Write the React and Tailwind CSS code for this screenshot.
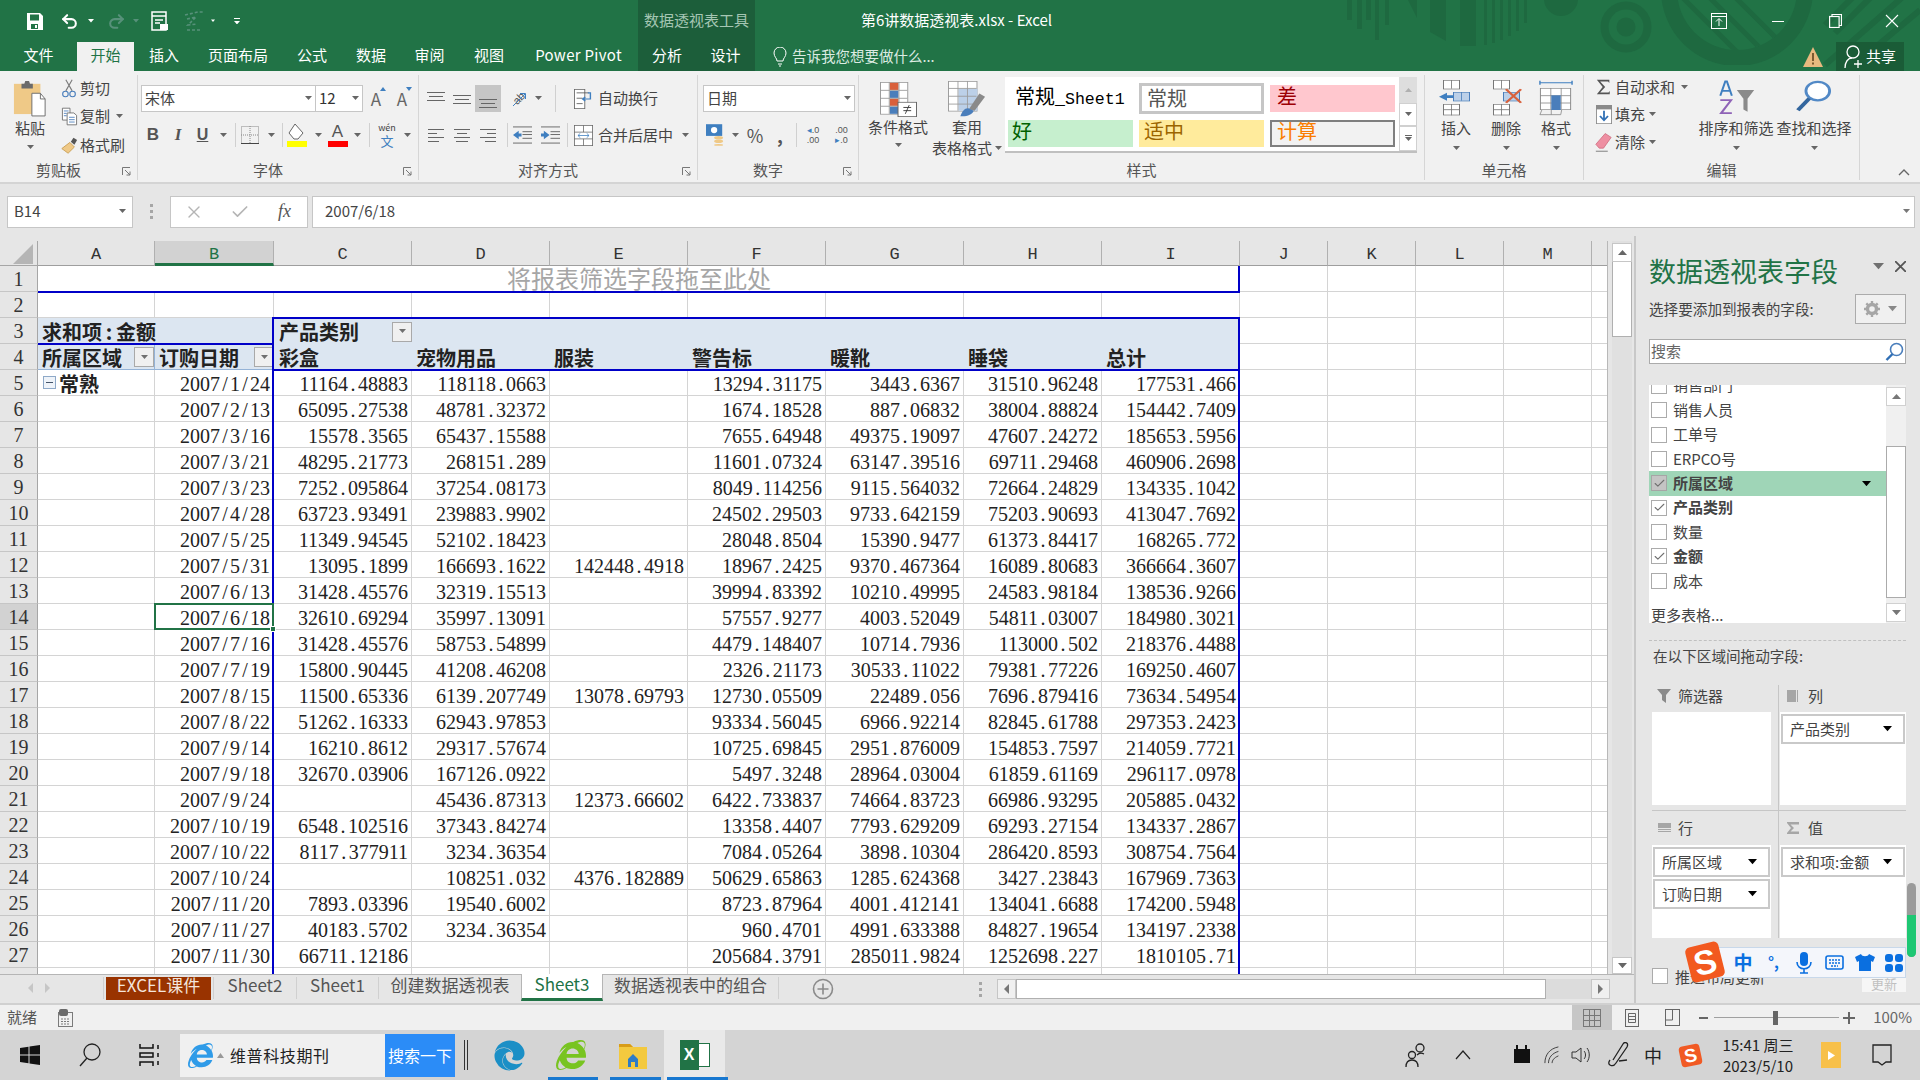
import React from "react";
import { Undo2, Redo2, X, Check } from "lucide-react";
import { FaInternetExplorer, FaEdge } from "react-icons/fa";

const SANS = "font-['Noto_Sans_CJK_SC',sans-serif]";
const S = ({ c = "", children }) => <div className={"flex items-center justify-center shrink-0 " + c}>{children}</div>;
const Caret = ({ c = "#666", w = 7 }) => <svg width={w} height={w * 0.58} viewBox="0 0 7 4"><path d="M0 0h7L3.5 4z" fill={c} /></svg>;
const Sep = ({ c = "" }) => <div className={"w-px bg-[#d0d0d0] shrink-0 " + c} />;

const rows = [
  ["2007/1/24", "11164.48883", "118118.0663", "", "13294.31175", "3443.6367", "31510.96248", "177531.466"],
  ["2007/2/13", "65095.27538", "48781.32372", "", "1674.18528", "887.06832", "38004.88824", "154442.7409"],
  ["2007/3/16", "15578.3565", "65437.15588", "", "7655.64948", "49375.19097", "47607.24272", "185653.5956"],
  ["2007/3/21", "48295.21773", "268151.289", "", "11601.07324", "63147.39516", "69711.29468", "460906.2698"],
  ["2007/3/23", "7252.095864", "37254.08173", "", "8049.114256", "9115.564032", "72664.24829", "134335.1042"],
  ["2007/4/28", "63723.93491", "239883.9902", "", "24502.29503", "9733.642159", "75203.90693", "413047.7692"],
  ["2007/5/25", "11349.94545", "52102.18423", "", "28048.8504", "15390.9477", "61373.84417", "168265.772"],
  ["2007/5/31", "13095.1899", "166693.1622", "142448.4918", "18967.2425", "9370.467364", "16089.80683", "366664.3607"],
  ["2007/6/13", "31428.45576", "32319.15513", "", "39994.83392", "10210.49995", "24583.98184", "138536.9266"],
  ["2007/6/18", "32610.69294", "35997.13091", "", "57557.9277", "4003.52049", "54811.03007", "184980.3021"],
  ["2007/7/16", "31428.45576", "58753.54899", "", "4479.148407", "10714.7936", "113000.502", "218376.4488"],
  ["2007/7/19", "15800.90445", "41208.46208", "", "2326.21173", "30533.11022", "79381.77226", "169250.4607"],
  ["2007/8/15", "11500.65336", "6139.207749", "13078.69793", "12730.05509", "22489.056", "7696.879416", "73634.54954"],
  ["2007/8/22", "51262.16333", "62943.97853", "", "93334.56045", "6966.92214", "82845.61788", "297353.2423"],
  ["2007/9/14", "16210.8612", "29317.57674", "", "10725.69845", "2951.876009", "154853.7597", "214059.7721"],
  ["2007/9/18", "32670.03906", "167126.0922", "", "5497.3248", "28964.03004", "61859.61169", "296117.0978"],
  ["2007/9/24", "", "45436.87313", "12373.66602", "6422.733837", "74664.83723", "66986.93295", "205885.0432"],
  ["2007/10/19", "6548.102516", "37343.84274", "", "13358.4407", "7793.629209", "69293.27154", "134337.2867"],
  ["2007/10/22", "8117.377911", "3234.36354", "", "7084.05264", "3898.10304", "286420.8593", "308754.7564"],
  ["2007/10/24", "", "108251.032", "4376.182889", "50629.65863", "1285.624368", "3427.23843", "167969.7363"],
  ["2007/11/20", "7893.03396", "19540.6002", "", "8723.87964", "4001.412141", "134041.6688", "174200.5948"],
  ["2007/11/27", "40183.5702", "3234.36354", "", "960.4701", "4991.633388", "84827.19654", "134197.2338"],
  ["2007/11/30", "66711.12186", "", "", "205684.3791", "285011.9824", "1252698.227", "1810105.71"],
];

const Num = ({ v }) => (
  <>
    {v.split(/([./])/).map((p, i) =>
      p === "." || p === "/" ? <span key={i} className="inline-block w-[10px] text-center">{p}</span> : <span key={i}>{p}</span>
    )}
  </>
);

const cellBase = "h-[26px] border-r border-b border-[#d4d4d4] bg-white";
const numCell = cellBase + " text-right pr-[3px] pt-[3px] leading-[22px] text-[20px] text-[#222] font-['Liberation_Serif','Noto_Sans_CJK_SC',serif] whitespace-nowrap overflow-hidden";
const hdrTxt = "h-[26px] bg-[#dce6f1] text-[20px] leading-[25px] font-bold text-[#222] pl-[4px] pt-[1px] whitespace-nowrap";

const RowH = ({ n, sel }) => (
  <div className={"h-[26px] border-r border-b border-r-[#a6a6a6] border-b-[#c6c6c6] text-center pt-[2px] leading-[23px] text-[20px] text-[#333] font-['Liberation_Serif',serif] " + (sel ? "bg-[#d2d2d2]" : "bg-[#e6e6e6]")}>{n}</div>
);
const Blanks = () => (
  <>
    <div className={cellBase} /><div className={cellBase} /><div className={cellBase} /><div className={cellBase} /><div className={cellBase} />
  </>
);
const FilterBtn = () => (
  <div className="w-[20px] h-[20px] shrink-0 border border-[#a9a9a9] bg-[#f0f0f0] flex items-center justify-center"><Caret c="#707070" /></div>
);

function Sheet() {
  const cols = ["A", "B", "C", "D", "E", "F", "G", "H", "I", "J", "K", "L", "M", ""];
  return (
    <div className="relative w-[1608px] shrink-0 h-[733px] overflow-hidden border-r border-[#b8b8b8] bg-white">
      <div className="grid grid-cols-[38px_117px_119px_repeat(7,138px)_repeat(4,88px)_16px]">
        <div className="h-[25px] bg-[#e6e6e6] border-r border-b border-[#a6a6a6] flex items-end justify-end pr-[4px] pb-[1px]">
          <svg width="20" height="20" viewBox="0 0 20 20"><path d="M20 0v20H0z" fill="#b5b5b5" /></svg>
        </div>
        {cols.map((c, i) => (
          <div key={i} className={"h-[25px] border-r border-b border-r-[#b0b0b0] text-center pt-[3px] leading-[21px] text-[17px] text-[#333] font-['Liberation_Mono',monospace] " + (c === "B" ? "bg-[#d2d2d2] border-b-[3px] border-b-[#217346] text-[#217346]" : "bg-[#e6e6e6] border-b-[#9e9e9e]")}>{c}</div>
        ))}

        <RowH n="1" />
        <div className={"col-span-9 h-[26px] bg-white text-center text-[24px] leading-[24px] text-[#a6a6a6] whitespace-nowrap " + SANS}>将报表筛选字段拖至此处</div>
        <Blanks />

        <RowH n="2" />
        {[...Array(9)].map((_, i) => <div key={i} className={cellBase} />)}
        <Blanks />

        <RowH n="3" />
        <div className={"col-span-2 " + hdrTxt}>求和项<span className="inline-block w-[14px] text-center">:</span>金额</div>
        <div className={hdrTxt + " flex items-center justify-between pr-0 pl-[5px]"}>产品类别<FilterBtn /></div>
        <div className={"col-span-6 " + hdrTxt} />
        <Blanks />

        <RowH n="4" />
        <div className={hdrTxt + " flex items-center justify-between pl-[4px] border-r border-b border-[#95b3d7]"}>所属区域<FilterBtn /></div>
        <div className={hdrTxt + " flex items-center justify-between pl-[4px] border-b border-[#95b3d7]"}>订购日期<FilterBtn /></div>
        <div className={hdrTxt + " pl-[5px]"}>彩盒</div>
        <div className={hdrTxt}>宠物用品</div>
        <div className={hdrTxt}>服装</div>
        <div className={hdrTxt}>警告标</div>
        <div className={hdrTxt}>暖靴</div>
        <div className={hdrTxt}>睡袋</div>
        <div className={hdrTxt}>总计</div>
        <Blanks />

        {rows.map((r, i) => (
          <React.Fragment key={i}>
            <RowH n={i + 5} sel={i === 9} />
            {i === 0 ? (
              <div className={cellBase + " flex items-center pl-[5px] gap-[3px]"}>
                <div className="w-[13px] h-[13px] border border-[#8ea9c8] bg-[#eef3f9] flex items-center justify-center"><div className="w-[7px] h-px bg-[#44546a]" /></div>
                <span className="text-[20px] font-bold leading-[25px] text-[#222] pt-[1px]">常熟</span>
              </div>
            ) : <div className={cellBase} />}
            {r.map((v, j) => <div key={j} className={numCell}><Num v={v} /></div>)}
            <Blanks />
          </React.Fragment>
        ))}
        <RowH n="" />
        {[...Array(14)].map((_, i) => <div key={i} className={cellBase} />)}
      </div>

      {/* pivot outlines and the selected cell lie over the grid */}
      <div className="absolute left-[38px] top-[50px] w-[1202px] h-[2px] bg-[#0000c8]" />
      <div className="absolute left-[1238px] top-[25px] w-[2px] h-[27px] bg-[#0000c8]" />
      <div className="absolute left-[272px] top-[76px] w-[968px] h-[2px] bg-[#0000c8]" />
      <div className="absolute left-[272px] top-[128px] w-[968px] h-[2px] bg-[#0000c8]" />
      <div className="absolute left-[38px] top-[102px] w-[235px] h-[2px] bg-[#0000c8]" />
      <div className="absolute left-[272px] top-[76px] w-[2px] h-[660px] bg-[#0000c8]" />
      <div className="absolute left-[1238px] top-[76px] w-[2px] h-[660px] bg-[#0000c8]" />
      <div className="absolute left-[154px] top-[362px] w-[120px] h-[27px] border-2 border-[#217346]" />
      <div className="absolute left-[270px] top-[385px] w-[6px] h-[6px] bg-[#217346] border border-white" />
    </div>
  );
}

/* ---------- ribbon icons ---------- */
const PasteIco = () => (
  <svg width="34" height="38" viewBox="0 0 36 40">
    <rect x="1" y="5" width="28" height="32" fill="#efc987" />
    <path d="M9 5h3l1-3h4l1 3h3v5H9z" fill="#6b6b6b" />
    <path d="M20 15h9l5 6v18H20z" fill="#fff" stroke="#6b6b6b" />
    <path d="M29 15v6h5" fill="none" stroke="#6b6b6b" />
  </svg>
);
const Scissor = () => (
  <svg width="16" height="19" viewBox="0 0 18 24" fill="none">
    <path d="M5 15 13 1M13 15 5 1" stroke="#7b7b7b" strokeWidth="1.4" />
    <circle cx="4.5" cy="19" r="3.5" stroke="#4a7ebb" strokeWidth="1.4" />
    <circle cx="13.5" cy="19" r="3.5" stroke="#4a7ebb" strokeWidth="1.4" />
  </svg>
);
const CopyIco = () => (
  <svg width="17" height="19" viewBox="0 0 18 24" fill="none" stroke="#6b6b6b" preserveAspectRatio="none">
    <path d="M1.5 1.5h8v15h-8z" fill="#fff" />
    <path d="M6.5 7.5h7l3 3v12h-10z" fill="#fff" />
    <path d="M3 5h5M3 8h3M3 11h3M8.5 13h6M8.5 16h6M8.5 19h6" stroke="#4a7ebb" />
  </svg>
);
const Painter = () => (
  <svg width="18" height="17" viewBox="0 0 20 22" preserveAspectRatio="none">
    <path d="M2 15 11 7l5 6-7 8z" fill="#efc987" stroke="#c79a4e" />
    <path d="M12 6l3-5 4 3-3 6z" fill="#555" />
  </svg>
);
const AlignLines = ({ kind }) => {
  const ys = kind === "top" ? [3, 7, 11] : kind === "mid" ? [6, 10, 14] : [10, 14, 18];
  return <svg width="18" height="20" viewBox="0 0 18 20" stroke="#666"><path d={`M0 ${ys[0]}.5h18M2 ${ys[1]}.5h14M0 ${ys[2]}.5h18`} /></svg>;
};
const HAlign = ({ kind }) => {
  const a = kind === "l" ? "M0 5.5h9" : kind === "c" ? "M3 5.5h10" : "M7 5.5h9";
  const b = kind === "l" ? "M0 13.5h11" : kind === "c" ? "M2 13.5h12" : "M5 13.5h11";
  return <svg width="16" height="15" viewBox="0 0 16 15" stroke="#666"><path d={`M0 1.5h16${a}M0 9.5h16${b}`} /></svg>;
};
const Indent = ({ rev }) => (
  <svg width="19" height="18" viewBox="0 0 20 18">
    <path d="M0 .5h20M0 17.5h20M10 5.5h10M10 8.5h10M10 12.5h10" stroke="#666" />
    {rev ? <path d="M0 9 6 4.5v3h3v3H6v3z" fill="#3f7fc0" /> : <path d="M9 9 3 4.5v3H0v3h3v3z" fill="#3f7fc0" />}
  </svg>
);
const WrapIco = () => (
  <svg width="19" height="20" viewBox="0 0 22 26" fill="none" preserveAspectRatio="none">
    <rect x=".5" y=".5" width="12" height="25" stroke="#666" fill="#fff" />
    <path d="M3 5h14M3 12h7M3 19h7" stroke="#555" />
    <path d="M16 5h3v8h-8M13 10.5 10 13l3 2.5" stroke="#3f7fc0" strokeWidth="1.6" />
  </svg>
);
const MergeIco = () => (
  <svg width="19" height="21" viewBox="0 0 24 28" fill="none" stroke="#666" preserveAspectRatio="none">
    <rect x=".5" y=".5" width="23" height="27" fill="#fff" />
    <path d="M.5 9.5h23M.5 18.5h23M12 .5v9M12 18.5v9" />
    <path d="M5 14h14M8 11l-3 3 3 3M16 11l3 3-3 3" stroke="#3f7fc0" />
  </svg>
);
const CondIco = () => (
  <svg width="37" height="35" viewBox="0 0 38 44" preserveAspectRatio="none">
    <rect x=".5" y=".5" width="28" height="40" fill="#fff" stroke="#9a9a9a" />
    <rect x="10" y="1" width="9" height="9" fill="#d9603b" />
    <rect x="10" y="11" width="9" height="9" fill="#4a7ebb" />
    <rect x="10" y="21" width="9" height="9" fill="#d9603b" />
    <rect x="10" y="31" width="9" height="9" fill="#4a7ebb" />
    <path d="M0 10.5h28M0 20.5h28M0 30.5h28M9.5 0v40M19.5 0v40" stroke="#9a9a9a" />
    <rect x="18.5" y="25.5" width="19" height="18" fill="#fff" stroke="#666" />
    <path d="M24 32h8M24 36h8M30 29l-4 11" stroke="#333" />
  </svg>
);
const TableIco = () => (
  <svg width="38" height="36" viewBox="0 0 40 46" preserveAspectRatio="none">
    <rect x=".5" y=".5" width="30" height="38" fill="#fff" stroke="#9a9a9a" />
    <rect x="11" y="10" width="20" height="28" fill="#bcd0e8" />
    <path d="M0 9.5h30M0 19.5h30M0 29.5h30M10.5 0v38M20.5 0v38" stroke="#9a9a9a" />
    <path d="M22 36 33 16l6 4-11 18z" fill="#8a8a8a" />
    <path d="M13 45c2-7 5-11 9-10l5 3c-1 5-8 8-14 7z" fill="#4a7ebb" />
  </svg>
);
const Cells3 = ({ kind }) => (
  <svg width="34" height="36" viewBox="0 0 34 54" fill="none" preserveAspectRatio="none">
    <g stroke="#777">
      <rect x="4.5" y=".5" width="16" height="13" fill="#fff" /><path d="M12.5 0v13" />
      <rect x="4.5" y="36.5" width="16" height="16" fill="#fff" /><path d="M12.5 36v17M4.5 44.5h16" />
      <rect x="14.5" y="18.5" width="16" height="13" fill="#bcd0e8" stroke="#4a7ebb" />
      {kind === "ins" && <path d="M22.5 18v13" stroke="#4a7ebb" />}
    </g>
    {kind === "ins" ? <path d="M0 25 8 19v4h6v4H8v4z" fill="#3f7fc0" /> : <path d="M17 14l15 20M32 14 17 34" stroke="#d9603b" strokeWidth="2.6" />}
  </svg>
);
const FormatIco = () => (
  <svg width="34" height="36" viewBox="0 0 36 54" fill="none" preserveAspectRatio="none">
    <path d="M1 4h34M1 1v6M35 1v6" stroke="#3f7fc0" strokeWidth="1.5" />
    <rect x="1.5" y="12.5" width="32" height="32" fill="#fff" stroke="#888" />
    <path d="M12.5 12v32M23.5 12v32M1.5 23.5h32M1.5 34.5h32" stroke="#888" />
    <rect x="13" y="23" width="10" height="22" fill="#4a7ebb" />
    <path d="M3 45l-2 7h22l1-7M13 45v7" stroke="#888" />
  </svg>
);
const Sigma = () => <svg width="15" height="16" viewBox="0 0 18 20" preserveAspectRatio="none"><path d="M1 1h15v4l-1.5-2H5l6 7-6 7h10l1.5-2v4H1l7-9z" fill="#555" /></svg>;
const FillIco = () => (
  <svg width="16" height="19" viewBox="0 0 18 26" preserveAspectRatio="none"><rect x=".5" y=".5" width="17" height="25" fill="#fff" stroke="#8a8a8a" /><rect y="0" width="18" height="6" fill="#8a8a8a" /><path d="M9 8v11M4.5 15 9 21l4.5-6" fill="none" stroke="#2f6fb5" strokeWidth="2" /></svg>
);
const Eraser = () => (
  <svg width="17" height="20" viewBox="0 0 20 26" preserveAspectRatio="none"><path d="M1 16 12 2l7 5-9 14H5z" fill="#ee8fa2" stroke="#cf6d80" /><path d="M1 25h14" stroke="#666" /></svg>
);
const SortIco = () => (
  <svg width="38" height="36" viewBox="0 0 46 50" preserveAspectRatio="none">
    <path d="M4 22 10 2h2l6 20M7 15h8" fill="none" stroke="#3f7fc0" strokeWidth="2.4" />
    <path d="M4 28h13L5 46h13" fill="none" stroke="#8f63b7" strokeWidth="2.6" />
    <path d="M24 14h21l-8 12v18l-5-3V26z" fill="#8a8a8a" />
  </svg>
);
const FindIco = () => (
  <svg width="36" height="37" viewBox="0 0 38 50" fill="none" preserveAspectRatio="none">
    <circle cx="23" cy="15" r="12.5" stroke="#5289c6" strokeWidth="3" fill="#fff" />
    <path d="M14 25 2 41" stroke="#33669e" strokeWidth="4.5" />
  </svg>
);

const BigBtn = ({ ico, c, children }) => (
  <div className={"flex flex-col items-center shrink-0 " + c}>{ico}{children}</div>
);
const Big3 = ({ c, ico, t }) => (
  <BigBtn c={"pt-[5px] " + c} ico={ico}>
    <div className="leading-[20px] mt-[2px]">{t}</div>
    <div className="mt-[8px]"><Caret /></div>
  </BigBtn>
);
const Group = ({ c, label, launcher, children }) => (
  <div className={"relative shrink-0 h-[105px] mt-[4px] border-r border-[#d6d6d6] flex flex-col " + c}>
    <div className="h-[88px] flex">{children}</div>
    <div className={"h-[20px] mt-[1px] leading-[20px] text-center text-[15px] text-[#555] " + (launcher ? "pr-[20px]" : "")}>{label}</div>
    {launcher && (
      <svg className="absolute right-[6px] bottom-[4px]" width="9" height="9" viewBox="0 0 9 9" fill="none" stroke="#777">
        <path d="M.5 8V.5H8M3 3l5 5M8 4.5V8H4.5" />
      </svg>
    )}
  </div>
);
const Sty = ({ c, children }) => (
  <div className={"h-[27px] flex items-center overflow-hidden text-[20px] font-['Liberation_Mono','Noto_Sans_CJK_SC',monospace] " + c}>{children}</div>
);

function Ribbon() {
  return (
    <div className="h-[113px] flex bg-[#f1f1f1] border-b-2 border-[#d4d4d4] text-[15px] text-[#444] shrink-0">
      <Group c="w-[138px]" label="剪贴板" launcher>
        <div className="w-[58px] flex flex-col items-center pt-[4px] pl-[2px] shrink-0">
          <PasteIco />
          <div className="leading-[20px] mt-[1px]">粘贴</div>
          <div className="mt-[7px]"><Caret /></div>
        </div>
        <div className="flex flex-col shrink-0">
          <div className="h-[26px] flex items-center"><S c="w-[22px]"><Scissor /></S>剪切</div>
          <div className="h-[29px] flex items-center mt-[1px]"><S c="w-[22px]"><CopyIco /></S>复制<span className="ml-[6px]"><Caret /></span></div>
          <div className="h-[28px] flex items-center"><S c="w-[22px]"><Painter /></S>格式刷</div>
        </div>
      </Group>

      <Group c="w-[281px]" label="字体" launcher>
        <div className="flex flex-col pl-[3px] pt-[10px]">
          <div className="flex h-[27px]">
            <div className="w-[175px] h-[27px] bg-white border border-[#c6c6c6] flex items-center justify-between px-[3px]">宋体<Caret /></div>
            <div className="w-[47px] h-[27px] bg-white border border-[#c6c6c6] border-l-0 flex items-center justify-between px-[3px] text-[#333]">12<Caret /></div>
            <S c="w-[26px] text-[#666] text-[17px]"><span className="relative">A<span className="absolute right-[-5px] top-[1px]"><svg width="6" height="4"><path d="M3 0l3 4H0z" fill="#3f7fc0" /></svg></span></span></S>
            <S c="w-[26px] text-[#666] text-[17px]"><span className="relative">A<span className="absolute right-[-5px] top-[1px]"><svg width="6" height="4"><path d="M3 4 6 0H0z" fill="#3f7fc0" /></svg></span></span></S>
          </div>
          <div className="flex h-[26px] mt-[10px] items-center">
            <S c="w-[24px] font-bold text-[17px] text-[#555] font-['Liberation_Sans']">B</S>
            <S c="w-[26px] italic font-bold text-[17px] text-[#555] font-['Liberation_Serif']">I</S>
            <S c="w-[23px] underline font-bold text-[16px] text-[#555] font-['Liberation_Sans']">U</S>
            <S c="w-[18px]"><Caret /></S>
            <div className="w-[3px]" /><Sep c="h-[24px]" />
            <S c="w-[28px]"><svg width="18" height="18" viewBox="0 0 18 18" fill="none" stroke="#888" strokeDasharray="1 1"><rect x=".5" y=".5" width="17" height="17" /><path d="M9 0v18M0 9h18" /><path d="M0 17.5h18" stroke="#444" strokeDasharray="0" /></svg></S>
            <S c="w-[14px]"><Caret /></S>
            <div className="w-[4px]" /><Sep c="h-[24px]" />
            <S c="w-[28px]"><svg width="22" height="24" viewBox="0 0 22 24"><path d="M9 1l8 9-5 6H8L3 10z" fill="#fff" stroke="#666" /><rect x="1" y="18" width="20" height="6" fill="#ffff00" /></svg></S>
            <S c="w-[14px]"><Caret /></S>
            <S c="w-[25px]"><div className="flex flex-col items-center"><span className="text-[17px] leading-[18px] text-[#555] font-['Liberation_Sans']">A</span><div className="w-[20px] h-[6px] bg-[#ff0000]" /></div></S>
            <S c="w-[15px]"><Caret /></S>
            <div className="w-[4px]" /><Sep c="h-[24px]" />
            <S c="w-[31px] pl-[3px]"><div className="flex flex-col items-center gap-[2px]"><span className="text-[9px] leading-[9px] text-[#444]">wén</span><span className="text-[13px] text-[#3f7fc0] leading-[14px]">文</span></div></S>
            <S c="w-[10px] pl-[3px]"><Caret /></S>
          </div>
        </div>
      </Group>

      <Group c="w-[279px]" label="对齐方式" launcher>
        <div className="flex flex-col pl-[4px] pt-[10px]">
          <div className="flex h-[27px]">
            <S c="w-[26px]"><AlignLines kind="top" /></S>
            <S c="w-[26px]"><AlignLines kind="mid" /></S>
            <S c="w-[26px] bg-[#c6c6c6]"><AlignLines kind="bot" /></S>
            <S c="w-[30px] pl-[6px]">
              <div className="relative w-[20px] h-[22px] flex items-center justify-center">
                <span className="text-[11px] leading-none text-[#555] rotate-[-45deg] font-['Liberation_Sans']">ab</span>
                <svg className="absolute left-0 top-0" width="20" height="22" viewBox="0 0 20 22" fill="none" stroke="#3f7fc0"><path d="M4 18 16 6M11 5.5h5.5V11" /></svg>
              </div>
            </S>
            <S c="w-[12px] pl-[2px]"><Caret /></S>
            <div className="w-[25px] flex justify-center"><Sep c="h-[27px]" /></div>
            <S c="w-[30px]"><WrapIco /></S>
            <span className="leading-[25px]">自动换行</span>
          </div>
          <div className="flex h-[28px] mt-[9px] items-center">
            <S c="w-[26px]"><HAlign kind="l" /></S>
            <S c="w-[26px]"><HAlign kind="c" /></S>
            <S c="w-[26px]"><HAlign kind="r" /></S>
            <div className="w-[6px]" />
            <Sep c="h-[24px]" />
            <S c="w-[28px] pl-[1px]"><Indent rev /></S>
            <S c="w-[28px]"><Indent /></S>
            <div className="w-[3px]" />
            <Sep c="h-[24px]" />
            <S c="w-[30px]"><MergeIco /></S>
            <span>合并后居中</span>
            <span className="ml-[9px]"><Caret /></span>
          </div>
        </div>
      </Group>

      <Group c="w-[161px]" label="数字" launcher>
        <div className="flex flex-col pl-[5px] pt-[10px]">
          <div className="w-[152px] h-[27px] bg-white border border-[#c6c6c6] flex items-center justify-between px-[3px]">日期<Caret /></div>
          <div className="flex h-[26px] mt-[10px] items-center">
            <S c="w-[24px]"><svg width="18" height="22" viewBox="0 0 20 24"><rect x="0" y="0" width="18" height="13" fill="#3f7fc0" /><circle cx="9" cy="6.5" r="3.5" fill="#fff" /><ellipse cx="14" cy="15" rx="5" ry="2" fill="#efc987" /><ellipse cx="14" cy="19" rx="5" ry="2" fill="#efc987" /><ellipse cx="14" cy="23" rx="5" ry="1" fill="#efc987" /></svg></S>
            <S c="w-[16px]"><Caret /></S>
            <S c="w-[24px] text-[18px] text-[#555]">%</S>
            <S c="w-[26px] text-[18px] font-bold text-[#555]">,</S>
            <Sep c="h-[24px] ml-[3px]" />
            <S c="w-[32px]"><div className="text-[9px] leading-[10px] text-[#555] text-right font-['Liberation_Sans']"><span className="text-[#3f7fc0]">◂</span>.0<br />.00</div></S>
            <S c="w-[25px]"><div className="text-[9px] leading-[10px] text-[#555] text-right font-['Liberation_Sans']">.00<br /><span className="text-[#3f7fc0]">▸</span>.0</div></S>
          </div>
        </div>
      </Group>

      <Group c="w-[566px]" label="样式">
        <BigBtn c="w-[72px] pt-[7px] ml-[3px]" ico={<CondIco />}>
          <div className="leading-[20px]">条件格式</div>
          <div className="mt-[6px]"><Caret /></div>
        </BigBtn>
        <div className="flex flex-col items-center w-[66px] pt-[6px] shrink-0">
          <TableIco />
          <div className="leading-[20px]">套用</div>
          <div className="leading-[20px] whitespace-nowrap mt-[1px] flex items-center">表格格式<span className="ml-[3px]"><Caret /></span></div>
        </div>
        <div className="w-[412px] h-[76px] mt-[2px] ml-[5px] bg-white border-b-2 border-[#c0c0c0] flex shrink-0">
          <div className="w-[394px] grid grid-cols-[125px_125px_125px] gap-x-[6px] gap-y-[6px] pl-[3px] pt-[8px] content-start">
            <Sty c="text-black pl-[7px]"><span className="whitespace-nowrap">常规<span className="text-[16.6px]">_Sheet1</span></span></Sty>
            <div className="h-[31px] -mt-[2px] border-[3px] border-[#c6c6c6] text-[20px] text-[#555] leading-[24px] pl-[5px]">常规</div>
            <Sty c="bg-[#ffc7ce] text-[#9c0006] pl-[7px]">差</Sty>
            <Sty c="bg-[#c6efce] text-[#006100] pl-[4px]">好</Sty>
            <Sty c="bg-[#ffeb9c] text-[#9c6500] pl-[5px]">适中</Sty>
            <Sty c="bg-[#f2f2f2] text-[#fa7d00] border-2 border-[#7f7f7f] pl-[5px]">计算</Sty>
          </div>
          <div className="w-[18px] flex flex-col shrink-0">
            <S c="h-[26px] bg-[#dedede]"><svg width="7" height="4"><path d="M3.5 0 7 4H0z" fill="#b0b0b0" /></svg></S>
            <S c="h-[23px] border border-[#d0d0d0] bg-white"><Caret /></S>
            <S c="h-[25px] border border-[#d0d0d0] bg-white"><div className="flex flex-col items-center gap-[1px]"><div className="w-[7px] h-px bg-[#666]" /><Caret /></div></S>
          </div>
        </div>
      </Group>

      <Group c="w-[159px]" label="单元格">
        <Big3 c="w-[50px] ml-[6px]" ico={<Cells3 kind="ins" />} t="插入" />
        <Big3 c="w-[50px]" ico={<Cells3 kind="del" />} t="删除" />
        <Big3 c="w-[50px]" ico={<FormatIco />} t="格式" />
      </Group>

      <Group c="w-[276px]" label="编辑">
        <div className="flex flex-col w-[114px] shrink-0 pl-[8px]">
          <div className="h-[24px] flex items-center"><S c="w-[23px]"><Sigma /></S>自动求和<span className="ml-[6px]"><Caret /></span></div>
          <div className="h-[28px] flex items-center mt-[1px]"><S c="w-[23px]"><FillIco /></S>填充<span className="ml-[4px]"><Caret /></span></div>
          <div className="h-[28px] flex items-center"><S c="w-[23px]"><Eraser /></S>清除<span className="ml-[4px]"><Caret /></span></div>
        </div>
        <BigBtn c="w-[76px] pt-[5px]" ico={<SortIco />}>
          <div className="leading-[20px] whitespace-nowrap mt-[2px]">排序和筛选</div>
          <div className="mt-[8px]"><Caret /></div>
        </BigBtn>
        <BigBtn c="w-[80px] pt-[5px]" ico={<FindIco />}>
          <div className="leading-[20px] whitespace-nowrap mt-[1px]">查找和选择</div>
          <div className="mt-[8px]"><Caret /></div>
        </BigBtn>
      </Group>

      <div className="flex-1 flex items-end justify-end pr-[10px] pb-[6px]">
        <svg width="12" height="8" viewBox="0 0 12 8" fill="none" stroke="#666" strokeWidth="1.4"><path d="M1 7l5-5 5 5" /></svg>
      </div>
    </div>
  );
}

function TitleArt() {
  return (
    <svg className="absolute left-[1300px] top-0" width="620" height="71" viewBox="0 0 620 71" fill="#1e6940">
      <defs>
        <clipPath id="bigc"><rect x="360" y="0" width="160" height="65" /></clipPath>
        <clipPath id="innerc"><circle cx="437" cy="-10" r="60" /></clipPath>
      </defs>
      <rect x="47" width="5" height="20" /><rect x="57" width="5" height="29" /><rect x="66" width="5" height="20" /><rect x="75" width="4" height="40" /><rect x="85" width="4" height="25" />
      <path d="M108 0h9v18z" />
      <path d="M130 0h16v41l-16-9z" /><rect x="160" width="16" height="46" />
      <rect x="184" width="3" height="45" /><rect x="192" width="3" height="43" /><rect x="200" width="3" height="40" /><rect x="208" width="3" height="36" /><rect x="216" width="3" height="31" /><rect x="224" width="3" height="23" />
      <circle cx="261" cy="-1" r="17" />
      <circle cx="326" cy="27" r="25.5" /><circle cx="326" cy="27" r="17.5" fill="#217346" /><circle cx="326" cy="27" r="9.5" />
      <g clipPath="url(#bigc)"><circle cx="437" cy="-10" r="76" /><circle cx="437" cy="-10" r="60" fill="#217346" /></g>
      <g clipPath="url(#innerc)" stroke="#1e6940" strokeWidth="5">
        <path d="M380 -5 l70 70M392 -20l80 80M368 8l50 55M408 -30l75 75" />
      </g>
      <g stroke="#1e6940" strokeWidth="6"><path d="M525 25 555 -5M535 33l40-40M605 -5l-80 70M620 10l-60 50" /></g>
    </svg>
  );
}

function TitleTabs() {
  const tab = "h-[29px] flex items-center justify-center text-[15px] pb-[3px] shrink-0 ";
  return (
    <div className="relative h-[71px] bg-[#217346] text-white shrink-0 overflow-hidden">
      <TitleArt />
      <div className="relative h-[42px] flex items-center">
        <S c="w-[60px] h-[42px] pl-[10px]">
          <svg width="16" height="17" viewBox="0 0 16 17"><path d="M0 0h13l3 3v14H0z" fill="#fff" /><rect x="3" y="1.5" width="9" height="6" fill="#217346" /><rect x="4" y="11" width="7" height="5" fill="#217346" /><rect x="8" y="12" width="2" height="3" fill="#fff" /></svg>
        </S>
        <Undo2 size={19} strokeWidth={2.6} />
        <S c="w-[24px]"><Caret c="#fff" w={6} /></S>
        <S c="w-[26px]"><Redo2 size={19} strokeWidth={2.6} className="text-[#57917a]" /></S>
        <S c="w-[14px]"><Caret c="#57917a" w={6} /></S>
        <S c="w-[34px]"><svg width="18" height="20" viewBox="0 0 18 20" fill="none" stroke="#fff" strokeWidth="1.5"><path d="M1 1h14v18H1zM1 5h14M4 9h8M4 12h5" /><rect x="9" y="13" width="8" height="6" fill="#fff" stroke="none" /></svg></S>
        <S c="w-[34px]"><svg width="20" height="20" viewBox="0 0 20 20" fill="none" stroke="#57917a" strokeWidth="1.6" strokeDasharray="3 2"><path d="M1 4 14 1l5 0M3 8l9-2-8 8 9-1M3 19h15" /></svg></S>
        <S c="w-[4px]"><Caret c="#fff" w={6} /></S>
        <S c="w-[44px]"><div className="flex flex-col items-center gap-[2px]"><div className="w-[6px] h-px bg-white" /><Caret c="#fff" w={6} /></div></S>
      </div>
      {/* context tab colouring */}
      <div className="absolute left-[638px] top-0 w-[117px] h-[71px] bg-[#1c5e3a]" />
      <div className="absolute left-[638px] top-0 w-[117px] h-[42px] pb-[2px] flex items-center justify-center text-[15px] text-[#a5c6b3] whitespace-nowrap overflow-hidden">数据透视表工具</div>
      <div className="absolute left-[861px] top-0 h-[42px] pb-[2px] flex items-center text-[15px] whitespace-nowrap">第6讲数据透视表.xlsx - Excel</div>
      <div className="absolute left-[1700px] top-0 h-[42px] flex items-center">
        <S c="w-[38px]"><svg width="16" height="16" viewBox="0 0 16 16" fill="none" stroke="#fff"><rect x=".5" y=".5" width="15" height="15" /><path d="M0 3.5h16M8 13V6M5 8.5 8 5.5l3 3" /></svg></S>
        <S c="w-[39px] ml-[20px]"><div className="w-[12px] h-px bg-white" /></S>
        <S c="w-[40px] ml-[18px]"><svg width="13" height="14" viewBox="0 0 13 14" fill="none" stroke="#fff" strokeWidth="1.2"><path d="M3 2V.5h9.5v11H10" /><rect x=".6" y="2.5" width="9.5" height="11" /></svg></S>
        <S c="w-[38px] ml-[18px]"><svg width="14" height="14" viewBox="0 0 14 14" stroke="#fff" strokeWidth="1.1"><path d="M1 1l12 12M13 1 1 13" /></svg></S>
      </div>

      <div className="relative h-[29px] flex items-center">
        <div className={tab + "w-[77px]"}>文件</div>
        <div className={tab + "w-[57px] bg-[#f1f1f1] text-[#217346]"}>开始</div>
        <div className={tab + "w-[60px]"}>插入</div>
        <div className={tab + "w-[88px]"}>页面布局</div>
        <div className={tab + "w-[60px]"}>公式</div>
        <div className={tab + "w-[58px]"}>数据</div>
        <div className={tab + "w-[59px]"}>审阅</div>
        <div className={tab + "w-[60px]"}>视图</div>
        <div className={tab + "w-[119px] tracking-[0.3px]"}>Power Pivot</div>
        <div className={tab + "w-[58px]"}>分析</div>
        <div className={tab + "w-[59px]"}>设计</div>
        <S c="w-[46px] pl-[3px]"><svg width="14" height="20" viewBox="0 0 14 20" fill="none" stroke="#fff"><path d="M4 14c0-3-3-4-3-8a6 6 0 0 1 12 0c0 4-3 5-3 8zM5 17h4M6 19h2" /></svg></S>
        <span className="ml-[-9px] pb-[2px] text-[14.5px] text-[#dcebe2] whitespace-nowrap">告诉我您想要做什么...</span>
        <div className="flex-1" />
        <S c="w-[24px] mr-[11px]"><svg width="20" height="20" viewBox="0 0 20 20"><path d="M10 0l10 20H0z" fill="#e8b97f" /><path d="M9 6h2v8H9zM9 15.5h2v2H9z" fill="#7c5a30" /></svg></S>
        <div className="w-[68px] h-[29px] mr-[16px] bg-[#1a5c37] flex items-center justify-center gap-[2px] text-[15px]">
          <svg width="20" height="24" viewBox="0 0 20 24" fill="none" stroke="#fff" strokeWidth="1.3"><circle cx="9" cy="7" r="6" /><path d="M1 23c0-6 3-10 7-10M10 19h8M14 15v8" /></svg>
          共享
        </div>
      </div>
    </div>
  );
}

function FormulaBar() {
  return (
    <div className="h-[52px] bg-[#e6e6e6] flex items-center pt-[3px] shrink-0 text-[#444]">
      <div className="ml-[7px] w-[126px] h-[32px] bg-white border border-[#c6c6c6] flex items-center justify-between pl-[6px] pr-[6px] text-[15px]">B14<Caret /></div>
      <S c="w-[37px]"><div className="flex flex-col gap-[3px]"><div className="w-[3px] h-[3px] bg-[#a6a6a6]" /><div className="w-[3px] h-[3px] bg-[#a6a6a6]" /><div className="w-[3px] h-[3px] bg-[#a6a6a6]" /></div></S>
      <div className="w-[138px] h-[32px] bg-white border border-[#c6c6c6] flex items-center shrink-0">
        <S c="w-[46px]"><X size={20} strokeWidth={1.6} className="text-[#b5b5b5]" /></S>
        <S c="w-[45px]"><Check size={20} strokeWidth={2} className="text-[#b5b5b5]" /></S>
        <S c="w-[45px] italic text-[18px] text-[#555] font-['Liberation_Serif',serif]">fx</S>
      </div>
      <div className="ml-[4px] w-[1603px] h-[32px] bg-white border border-[#c6c6c6] flex items-center justify-between pl-[12px] pr-[4px] text-[15px] text-[#444]">2007/6/18<Caret c="#777" /></div>
    </div>
  );
}

const SheetTab = ({ c, children }) => (
  <div className={"h-[23px] leading-[16px] flex items-start justify-center shrink-0 whitespace-nowrap " + c}>{children}</div>
);
function TabsRow() {
  return (
    <div className="h-[29px] flex items-start bg-[#e6e6e6] text-[17px] text-[#555] border-t border-[#b5b5b5] shrink-0">
      <S c="w-[20px] ml-[20px] h-[26px]"><svg width="5" height="10"><path d="M5 0v10L0 5z" fill="#c6c6c6" /></svg></S>
      <S c="w-[20px] ml-[-3px] mr-[46px] h-[26px]"><svg width="5" height="10"><path d="M0 0v10l5-5z" fill="#c6c6c6" /></svg></S>
      <Sep c="h-[22px] mt-[2px] bg-[#a6a6a6]" />
      <div className="w-[2px]" />
      <SheetTab c="w-[105px] bg-[#993300] text-[#f3e5dc] mt-[2px] h-[23px]">EXCEL课件</SheetTab>
      <div className="w-[2px]" />
      <Sep c="h-[22px] mt-[2px] bg-[#a6a6a6]" />
      <SheetTab c="w-[82px] mt-[2px]">Sheet2</SheetTab>
      <Sep c="h-[22px] mt-[2px] bg-[#a6a6a6]" />
      <SheetTab c="w-[81px] mt-[2px]">Sheet1</SheetTab>
      <Sep c="h-[22px] mt-[2px] bg-[#a6a6a6]" />
      <SheetTab c="w-[142px] mt-[2px]">创建数据透视表</SheetTab>
      <div className="w-[82px] h-[27px] bg-white border-x border-[#b5b5b5] border-b-[3px] border-b-[#217346] text-[#217346] flex items-start justify-center leading-[20px] shrink-0 mt-[-1px]">Sheet3</div>
      <SheetTab c="w-[175px] mt-[2px]">数据透视表中的组合</SheetTab>
      <Sep c="h-[22px] mt-[2px] bg-[#a6a6a6]" />
      <S c="w-[88px] h-[28px]"><svg width="22" height="22" viewBox="0 0 22 22" fill="none" stroke="#8a8a8a" strokeWidth="1.6"><circle cx="11" cy="11" r="9.5" /><path d="M11 5.5v11M5.5 11h11" /></svg></S>
      <S c="w-[130px] h-[28px] pl-[97px]"><div className="flex flex-col gap-[3px]"><div className="w-[3px] h-[3px] bg-[#a6a6a6]" /><div className="w-[3px] h-[3px] bg-[#a6a6a6]" /><div className="w-[3px] h-[3px] bg-[#a6a6a6]" /></div></S>
      <div className="w-[613px] h-[20px] mt-[4px] flex bg-[#dcdcdc] shrink-0">
        <S c="w-[19px] bg-[#f0f0f0] border border-[#c6c6c6]"><svg width="5" height="10"><path d="M5 0v10L0 5z" fill="#777" /></svg></S>
        <div className="w-[530px] bg-white border border-[#b0b0b0]" />
        <div className="flex-1" />
        <S c="w-[19px] bg-[#f0f0f0] border border-[#c6c6c6]"><svg width="5" height="10"><path d="M0 0v10l5-5z" fill="#777" /></svg></S>
      </div>
    </div>
  );
}

const Chk = ({ on, hl }) => (
  <div className={"w-[16px] h-[16px] border shrink-0 flex items-center justify-center " + (hl ? "bg-[#c4c4c4] border-[#a6a6a6]" : "bg-white border-[#ababab]")}>
    {on && <Check size={13} strokeWidth={2} className="text-[#707070]" />}
  </div>
);
const Field = ({ t, on, bold, hl, c = "" }) => (
  <div className={"h-[25px] flex items-center pl-[2px] gap-[6px] text-[15px] text-[#444] " + (hl ? "bg-[#9fd5b7] " : "") + (bold ? "font-bold " : "") + c}>
    <Chk on={on} hl={hl} />
    <span className="flex-1">{t}</span>
    {hl && <span className="mr-[15px]"><Caret c="#000" w={9} /></span>}
  </div>
);
const AreaItem = ({ c = "", children }) => (
  <div className={"h-[30px] bg-white border-2 border-[#c9c9c9] flex items-center justify-between pl-[7px] pr-[11px] text-[15px] text-[#444] " + c}>{children}<Caret c="#000" w={9} /></div>
);

function Panel() {
  return (
    <div className="w-[286px] h-[767px] shrink-0 bg-[#e6e6e6] border-l-2 border-[#c8c8c8] pl-[13px] pr-[14px] flex flex-col text-[#444]">
      <div className="mt-[17px] h-[35px] flex items-center justify-between">
        <span className="text-[27px] leading-[35px] text-[#217346] whitespace-nowrap">数据透视表字段</span>
        <div className="flex items-center gap-[11px] mt-[-8px]">
          <Caret c="#707070" w={11} />
          <svg width="11" height="11" viewBox="0 0 11 11" stroke="#555" strokeWidth="1.8"><path d="M0 0l11 11M11 0 0 11" /></svg>
        </div>
      </div>
      <div className="mt-[6px] h-[30px] flex items-center justify-between">
        <span className="text-[14.6px] whitespace-nowrap">选择要添加到报表的字段:</span>
        <div className="w-[51px] h-[30px] bg-[#f0f0f0] border border-[#ababab] flex items-center justify-center gap-[8px]">
          <svg width="16" height="16" viewBox="0 0 16 16"><circle cx="8" cy="8" r="4.5" fill="none" stroke="#a6a6a6" strokeWidth="3.4" /><path d="M8 0v3M8 13v3M0 8h3M13 8h3M2.3 2.3l2 2M11.7 11.7l2 2M13.7 2.3l-2 2M4.3 11.7l-2 2" stroke="#a6a6a6" strokeWidth="2.4" /></svg>
          <Caret c="#888" w={9} />
        </div>
      </div>
      <div className="mt-[15px] h-[25px] bg-white border border-[#ababab] flex items-center justify-between pl-[1px] pr-[1px] text-[15px] text-[#666]">
        搜索
        <svg width="19" height="19" viewBox="0 0 19 19" fill="none"><circle cx="11.5" cy="7.5" r="6" stroke="#4a7ebb" strokeWidth="1.6" /><path d="M7.5 12 1.5 18" stroke="#2f6fb5" strokeWidth="2.4" /></svg>
      </div>

      <div className="mt-[21px] h-[238px] bg-white flex overflow-hidden">
        <div className="w-[237px] shrink-0 flex flex-col">
          <div className="h-[13px] shrink-0 overflow-hidden relative"><div className="absolute left-0 bottom-0 flex items-center h-[25px] pl-[2px] gap-[6px] text-[15px] whitespace-nowrap"><Chk /><span>销售部门</span></div></div>
          <Field t="销售人员" />
          <Field t="工单号" />
          <Field t="ERPCO号" />
          <Field t="所属区域" on bold hl />
          <Field t="产品类别" on bold />
          <Field t="数量" />
          <Field t="金额" on bold />
          <Field t="成本" />
          <div className="text-[15px] mt-[13px] pl-[2px] leading-[17px] whitespace-nowrap">更多表格...</div>
        </div>
        <div className="w-[20px] flex flex-col pt-[2px] pb-[1px] shrink-0 bg-[#f0f0f0]">
          <S c="h-[19px] bg-white border border-[#d0d0d0]"><svg width="9" height="5"><path d="M4.5 0 9 5H0z" fill="#777" /></svg></S>
          <div className="h-[40px]" />
          <div className="h-[152px] bg-white border border-[#ababab]" />
          <div className="h-[5px]" />
          <S c="h-[19px] bg-white border border-[#d0d0d0]"><Caret c="#777" w={9} /></S>
        </div>
      </div>

      <div className="mt-[17px] border-t border-dashed border-[#c0c0c0]" />
      <div className="mt-[5px] h-[20px] leading-[20px] pl-[4px] text-[14.6px] whitespace-nowrap">在以下区域间拖动字段:</div>

      <div className="mt-[19px] ml-[3px] w-[254px] h-[253px] grid grid-cols-[127px_127px] grid-rows-[126px_127px]">
        <div className="border-r border-b border-[#c6c6c6] pr-[7px] flex flex-col">
          <div className="h-[27px] flex items-center gap-[7px] pl-[5px] text-[15px] pb-[5px]"><svg width="14" height="14" viewBox="0 0 14 14"><path d="M0 0h14L9 6v8L5 11V6z" fill="#8a8a8a" /></svg>筛选器</div>
          <div className="h-[93px] bg-white" />
        </div>
        <div className="border-b border-[#c6c6c6] pl-[1px] flex flex-col">
          <div className="h-[27px] flex items-center gap-[9px] pl-[7px] text-[15px] pb-[5px]"><svg width="12" height="12" viewBox="0 0 12 12"><rect width="8" height="12" fill="#a6a6a6" /><path d="M8.5 0v12M10.5 0v12" stroke="#a6a6a6" /></svg>列</div>
          <div className="h-[93px] bg-white pt-[2px] pl-[1px] pr-[1px]"><AreaItem>产品类别</AreaItem></div>
        </div>
        <div className="border-r border-[#c6c6c6] pr-[7px] flex flex-col">
          <div className="h-[34px] flex items-center gap-[7px] pl-[6px] text-[15px]"><svg width="13" height="10" viewBox="0 0 13 10"><rect width="13" height="5" fill="#a6a6a6" /><path d="M0 6.5h13M0 8.5h13" stroke="#a6a6a6" /></svg>行</div>
          <div className="h-[93px] bg-white pt-[2px] px-[1px] flex flex-col gap-[2px]"><AreaItem>所属区域</AreaItem><AreaItem>订购日期</AreaItem></div>
        </div>
        <div className="pl-[1px] flex flex-col">
          <div className="h-[34px] flex items-center gap-[9px] pl-[7px] text-[15px]"><svg width="12" height="12" viewBox="0 0 12 12"><path d="M0 0h12v2.5H3.5L7 6l-3.5 3.5H12V12H0v-1l4-5-4-5z" fill="#a6a6a6" /></svg>值</div>
          <div className="h-[93px] bg-white pt-[2px] pl-[1px] pr-[1px]"><AreaItem>求和项:金额</AreaItem></div>
        </div>
      </div>

      <div className="mt-[30px] ml-[3px] h-[24px] flex items-start">
        <div className="w-[16px] h-[16px] bg-white border border-[#ababab] shrink-0" />
        <span className="ml-[7px] text-[15px] leading-[17px] whitespace-nowrap">推迟布局更新</span>
        <div className="ml-auto w-[44px] h-[17px] mt-[7px] bg-[#f6f6f6] text-[13px] leading-[17px] text-center text-[#c0c0c0]">更新</div>
      </div>
    </div>
  );
}

function StatusBar() {
  return (
    <div className="h-[27px] bg-[#f0f0f0] border-t-2 border-[#d0d0d0] flex items-center text-[15px] text-[#555] shrink-0">
      <span className="ml-[7px]">就绪</span>
      <svg className="ml-[21px]" width="15" height="18" viewBox="0 0 15 18"><rect x=".5" y="3.5" width="14" height="14" fill="none" stroke="#7a7a7a" /><rect x="1" width="9" height="7" rx="2" fill="#6a6a6a" /><path d="M3 10h9M3 12.5h9M3 15h9" stroke="#7a7a7a" strokeDasharray="2 1" /></svg>
      <div className="flex-1" />
      <S c="w-[40px] h-[25px] bg-[#c6c6c6]"><svg width="18" height="18" viewBox="0 0 18 18" fill="none" stroke="#777"><rect x=".5" y=".5" width="17" height="17" /><path d="M6.5 0v18M11.5 0v18M0 6.5h18M0 11.5h18" /></svg></S>
      <S c="w-[40px]"><svg width="14" height="18" viewBox="0 0 14 18" fill="none" stroke="#666"><rect x=".5" y=".5" width="13" height="17" /><path d="M3.5 4.5h7v9h-7zM3.5 7.5h7M3.5 10.5h7" /></svg></S>
      <S c="w-[40px]"><svg width="15" height="17" viewBox="0 0 15 17" fill="none" stroke="#666"><rect x=".5" y=".5" width="14" height="16" /><path d="M7.5 0v11H0" /></svg></S>
      <S c="w-[22px]"><div className="w-[9px] h-[2px] bg-[#666]" /></S>
      <div className="w-[125px] h-[14px] relative flex items-center shrink-0"><div className="w-full h-px bg-[#a0a0a0]" /><div className="absolute left-[59px] top-0 w-[5px] h-[14px] bg-[#666]" /></div>
      <S c="w-[20px]"><svg width="12" height="12" stroke="#666" strokeWidth="2"><path d="M6 0v12M0 6h12" /></svg></S>
      <span className="ml-[14px] mr-[8px] text-[#666]">100%</span>
    </div>
  );
}

function Taskbar() {
  return (
    <div className="h-[50px] bg-[#d4d4d4] flex items-center shrink-0 relative">
      <S c="w-[60px] h-[50px]"><svg width="20" height="20" viewBox="0 0 20 20" fill="#111"><path d="M0 3l8.5-1.2v7.7H0zM9.5 1.6 20 0v9.5H9.5zM0 10.5h8.5v7.7L0 17zM9.5 10.5H20V20L9.5 18.4z" /></svg></S>
      <S c="w-[60px]"><svg width="22" height="24" viewBox="0 0 22 24" fill="none" stroke="#222" strokeWidth="1.3"><circle cx="13" cy="9" r="8" /><path d="M8 15 1 23" /></svg></S>
      <S c="w-[60px]"><svg width="22" height="24" viewBox="0 0 22 24" fill="none" stroke="#111" strokeWidth="1.5"><path d="M1 1v4h13V1M1 23v-4h13v4M1 10h13v4H1zM19 2v4M19 10v4M19 18v4" /></svg></S>
      <div className="w-[205px] h-[43px] bg-[#f0f0f0] flex items-center shrink-0">
        <FaInternetExplorer size={25} className="ml-[8px] text-[#2f9be8]" />
        <svg className="ml-[4px]" width="7" height="5"><path d="M3.5 0 7 5H0z" fill="#999" /></svg>
        <span className="ml-[6px] text-[16px] tracking-[0.6px] text-[#222] whitespace-nowrap">维普科技期刊</span>
      </div>
      <div className="w-[70px] h-[43px] bg-[#2b8cf7] text-white text-[16px] leading-[43px] text-center shrink-0">搜索一下</div>
      <div className="w-[4px] h-[30px] ml-[9px] border-x border-[#333] shrink-0" />
      <S c="w-[62px] h-[50px] ml-[10px]"><FaEdge size={31} className="text-[#1b8fc6]" /></S>
      <S c="w-[61px] h-[50px]"><FaInternetExplorer size={30} className="text-[#78c421]" /></S>
      <S c="w-[63px] h-[50px]">
        <svg width="30" height="30" viewBox="0 0 30 30"><path d="M1 4h11l3 3h14v22H1z" fill="#f3c93f" /><path d="M1 4h11l3 3H1z" fill="#d89c18" /><path d="M10 19l5-5 5 5v8h-3v-5h-4v5h-3z" fill="#2e7cc6" /></svg>
      </S>
      <S c="w-[61px] h-[50px] bg-[#e9e9e9]">
        <div className="relative w-[30px] h-[30px]">
          <div className="absolute right-0 top-[3px] w-[17px] h-[24px] bg-white border border-[#217346]" />
          <div className="absolute left-0 top-0 w-[19px] h-[30px] bg-[#217346] text-white text-[16px] leading-[30px] text-center font-bold font-['Liberation_Sans']">X</div>
        </div>
      </S>
      <div className="absolute left-[548px] bottom-0 w-[50px] h-[3px] bg-[#1878d0]" />
      <div className="absolute left-[610px] bottom-0 w-[51px] h-[3px] bg-[#1878d0]" />
      <div className="absolute left-[667px] bottom-0 w-[61px] h-[3px] bg-[#1878d0]" />
      <div className="flex-1" />
      <S c="w-[46px] ml-[2px]"><svg width="24" height="26" viewBox="0 0 24 26" fill="none" stroke="#222" strokeWidth="1.3"><circle cx="15" cy="6" r="4" /><circle cx="7" cy="13" r="3.5" /><path d="M1 25c0-5 3-7 6-7s6 2 6 7M12 13c2-2 5-2 7-1" /></svg></S>
      <S c="w-[46px]"><svg width="16" height="10" viewBox="0 0 16 10" fill="none" stroke="#222" strokeWidth="1.2"><path d="M1 9l7-8 7 8" /></svg></S>
      <S c="w-[44px] ml-[14px]"><svg width="18" height="20" viewBox="0 0 18 20"><rect x="1" y="4" width="16" height="14" fill="#111" /><rect x="3" y="0" width="2" height="5" fill="#111" /><rect x="12" y="0" width="2" height="5" fill="#111" /></svg></S>
      <S c="w-[18px]"><svg width="20" height="20" viewBox="0 0 20 20" fill="none" stroke="#333"><path d="M1 19C1 10 6 3 16 1M5 19c0-6 4-11 11-13M9 19c0-3 2-6 7-8" /></svg></S>
      <S c="w-[40px]"><svg width="22" height="20" viewBox="0 0 22 20" fill="none" stroke="#333"><path d="M1 7h4l5-4v14l-5-4H1zM13 6c2 2 2 6 0 8M16 3c3 4 3 10 0 14" /></svg></S>
      <S c="w-[34px]"><svg width="24" height="26" viewBox="0 0 24 26" fill="none" stroke="#222" strokeWidth="1.3"><path d="M3 18c-4 5 3 8 6 3L20 5c2-4-2-6-4-3L6 18" /><path d="M12 19l8-1" /></svg></S>
      <S c="w-[34px] text-[18px] text-[#222]">中</S>
      <S c="w-[40px]"><div className="w-[21px] h-[21px] rounded-[4px] bg-[#f15a24] rotate-[-12deg] text-white text-[19px] font-bold leading-[21px] text-center font-['Liberation_Sans']">S</div></S>
      <div className="w-[96px] text-center text-[15px] leading-[21px] text-[#222] shrink-0 whitespace-nowrap">15:41 周三<br />2023/5/10</div>
      <S c="w-[50px]"><div className="w-[20px] h-[26px] bg-[#f7c04a] flex items-center justify-center"><svg width="7" height="9"><path d="M0 0l7 4.5L0 9z" fill="#fff" /></svg></div></S>
      <S c="w-[64px] pr-[12px]"><svg width="20" height="22" viewBox="0 0 20 22" fill="none" stroke="#222" strokeWidth="1.3"><path d="M1 1h18v17h-5l-4 3-4-3H1z" /></svg></S>
    </div>
  );
}

function Overlays() {
  return (
    <>
      <div className="absolute left-[1907px] top-[883px] w-[9px] h-[74px] rounded-full overflow-hidden bg-[#9b9b9b] flex flex-col justify-end"><div className="h-[42px] bg-[#1ec773]" /></div>
      <div className="absolute left-[1705px] top-[947px] w-[201px] h-[31px] bg-[#f4f6fb] border border-[#c8d8ea] flex items-center pl-[22px] text-[#0a6fe0]">
        <S c="w-[30px] text-[19px] font-bold">中</S>
        <S c="w-[31px] text-[15px] font-bold">°,</S>
        <S c="w-[29px]"><svg width="16" height="22" viewBox="0 0 16 22"><rect x="4" y="0" width="8" height="14" rx="4" fill="#0a6fe0" /><path d="M1 10c0 9 14 9 14 0M8 17v4M4 21h8" fill="none" stroke="#0a6fe0" strokeWidth="1.6" /></svg></S>
        <S c="w-[32px]"><svg width="19" height="15" viewBox="0 0 19 15"><rect x="1" y="1" width="17" height="13" rx="2" fill="none" stroke="#0a6fe0" strokeWidth="1.6" /><path d="M4 5h11M4 8h11M6 11h7" stroke="#0a6fe0" strokeWidth="1.5" strokeDasharray="2 1" /></svg></S>
        <S c="w-[29px]"><svg width="20" height="17" viewBox="0 0 20 17"><path d="M6 0 0 3l2 5 2-1v10h12V7l2 1 2-5-6-3c-1 3-7 3-8 0z" fill="#0a6fe0" /></svg></S>
        <S c="w-[29px]"><svg width="18" height="18" viewBox="0 0 18 18" fill="#0a6fe0"><rect width="8" height="8" rx="3" /><rect x="10" width="8" height="8" rx="3" /><rect y="10" width="8" height="8" rx="3" /><rect x="10" y="10" width="8" height="8" rx="3" /></svg></S>
      </div>
      <div className="absolute left-[1688px] top-[944px] w-[34px] h-[36px] rounded-[5px] bg-[#f2591f] rotate-[-14deg] text-white text-[34px] font-bold leading-[36px] text-center font-['Liberation_Sans',sans-serif]">S</div>
    </>
  );
}

export default function App() {
  return (
    <div className={"relative w-[1920px] h-[1080px] overflow-hidden flex flex-col bg-[#e6e6e6] " + SANS}>
      <TitleTabs />
      <Ribbon />
      <FormulaBar />
      <div className="flex h-[767px] shrink-0">
        <div className="w-[1634px] shrink-0 flex flex-col">
          <div className="flex h-[738px] pt-[5px] shrink-0">
            <Sheet />
            <div className="w-[20px] ml-[4px] shrink-0 h-[733px] bg-[#e0e0e0] flex flex-col">
              <S c="h-[19px] bg-white border border-[#c6c6c6] mt-[2px]"><svg width="9" height="5"><path d="M4.5 0 9 5H0z" fill="#666" /></svg></S>
              <div className="h-[75px] bg-white border border-[#b0b0b0] border-t-0" />
              <div className="flex-1" />
              <S c="h-[17px] bg-white border border-[#c6c6c6]"><Caret c="#666" w={9} /></S>
            </div>
          </div>
          <TabsRow />
        </div>
        <Panel />
      </div>
      <StatusBar />
      <Taskbar />
      <Overlays />
    </div>
  );
}
